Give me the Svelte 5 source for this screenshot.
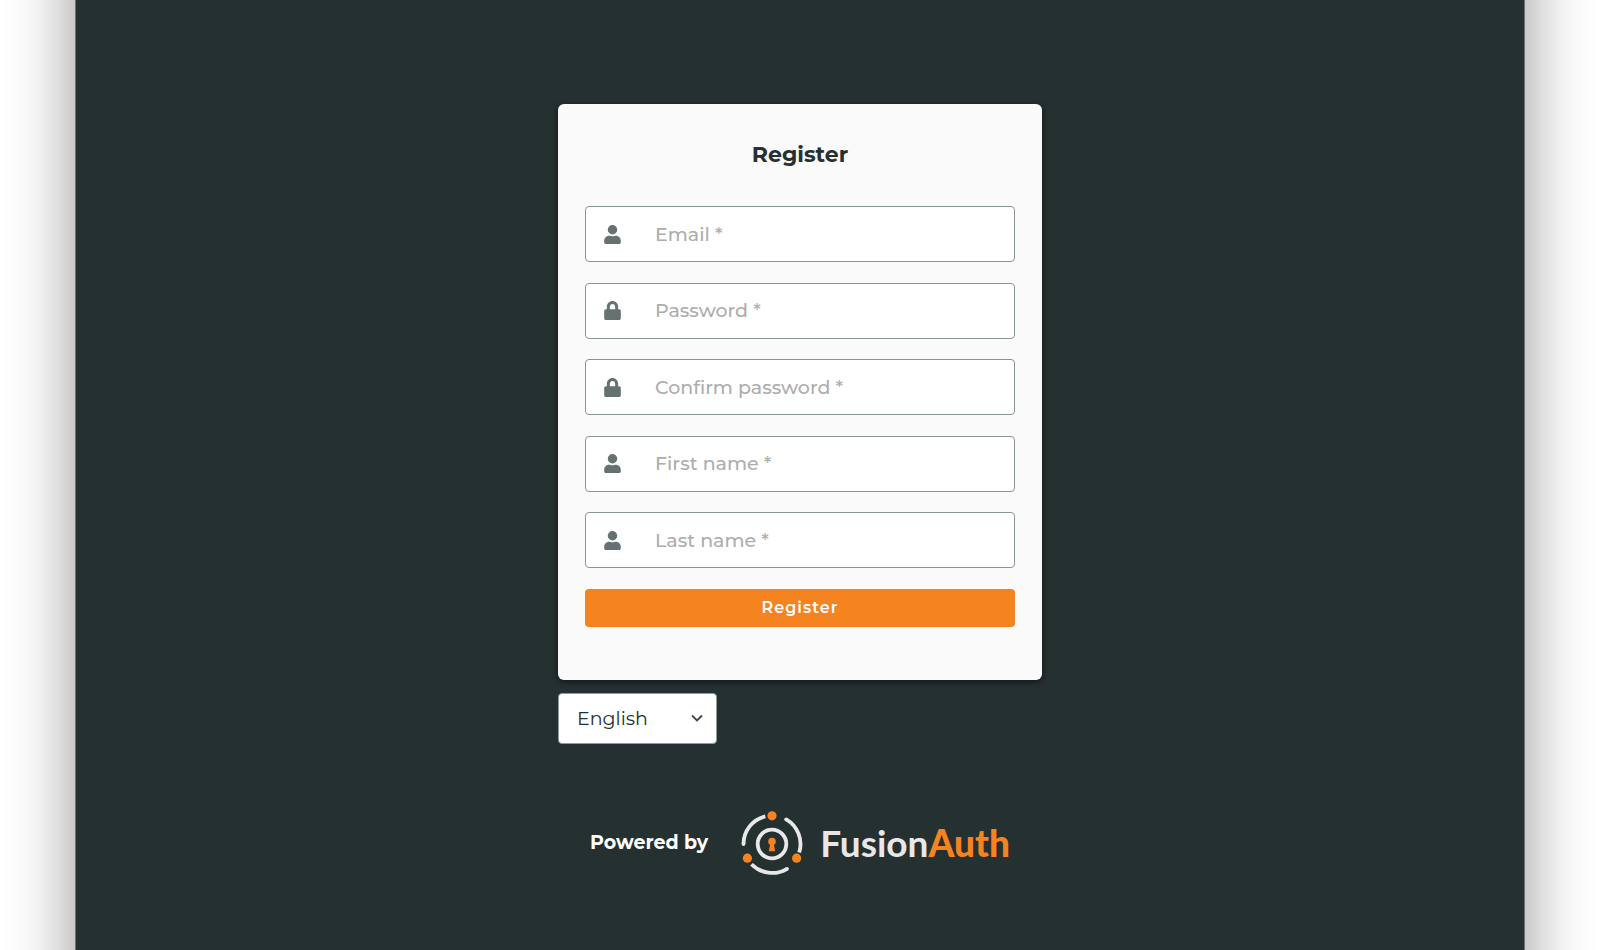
<script lang="ts">
  const fields = [
    { id: 'email', label: 'Email', type: 'email', icon: 'user' },
    { id: 'password', label: 'Password', type: 'password', icon: 'lock' },
    { id: 'confirm', label: 'Confirm password', type: 'password', icon: 'lock' },
    { id: 'first-name', label: 'First name', type: 'text', icon: 'user' },
    { id: 'last-name', label: 'Last name', type: 'text', icon: 'user' }
  ];
  const paths: Record<string, string> = {
    user: 'M224 256A128 128 0 1 0 224 0a128 128 0 1 0 0 256zm89.600 32h-16.700a174 174 0 0 1-145.800 0h-16.700C60.200 288 0 348.200 0 422.400V464c0 26.500 21.500 48 48 48h352c26.500 0 48-21.500 48-48v-41.600C448 348.200 387.800 288 313.600 288z',
    lock: 'M400 224h-24v-72C376 68.200 307.800 0 224 0S72 68.200 72 152v72H48c-26.500 0-48 21.500-48 48v192c0 26.500 21.500 48 48 48h352c26.500 0 48-21.500 48-48V272c0-26.500-21.500-48-48-48zm-104 0H152v-72c0-39.700 32.300-72 72-72s72 32.300 72 72v72z'
  };
</script>

<div class="backdrop">
  <main class="page">
    <div class="column">
      <section class="card">
        <h1>Register</h1>
        <form>
          {#each fields as field}
            <label class="field" for={field.id}>
              <svg viewBox="0 0 448 512" role="img" aria-label={field.label}>
                <path d={paths[field.icon]} />
              </svg>
              <input id={field.id} type={field.type} placeholder="{field.label} *" />
            </label>
          {/each}
          <button type="button">Register</button>
        </form>
      </section>

      <div class="language">
        <select aria-label="Language">
          <option>English</option>
        </select>
        <svg viewBox="0 0 12 8" aria-hidden="true"><path d="M1 1.500l5 5 5-5" /></svg>
      </div>

      <footer>
        <span class="powered">Powered by</span>
        <a class="brand" href="#fusionauth">
          <svg viewBox="-32 -33 64 66" aria-hidden="true">
            <g class="ring">
              <circle r="14.300" />
              <path d="M-28.500 0A28.500 28.500 0 0 1-6.700-27.700" />
              <path d="M14.200-24.700A28.500 28.500 0 0 1 27.200 8.500" />
              <path d="M15 24.800A28.800 28.800 0 0 1-20.500 20.200" />
            </g>
            <g class="caps">
              <circle cx="-28.500" cy="0" r="1.900" />
              <circle cx="14.200" cy="-24.700" r="1.900" />
              <circle cx="15" cy="24.800" r="1.900" />
            </g>
            <g class="accent">
              <circle cx="0" cy="-28.200" r="4.600" />
              <circle cx="-24.600" cy="14.200" r="4.600" />
              <circle cx="24.600" cy="14.200" r="4.600" />
              <circle cx="0" cy="-2.400" r="3.800" />
              <path d="M-1.800 0h3.600l1.400 7.300h-6.400z" />
            </g>
          </svg>
          <span class="wordmark">Fusion<b>Auth</b></span>
        </a>
      </footer>
    </div>
  </main>
</div>

<style>
  :global(body) {
    margin: 0;
    background: #fff;
  }
  /* The panel runs past both ends so its side shadow keeps an even strength. */
  .backdrop {
    overflow: hidden;
    min-height: 100vh;
    display: flex;
  }
  .page {
    box-sizing: border-box;
    flex: 1;
    min-width: 0;
    margin: -80px 75px;
    padding: 184px 20px 144px;
    background: #253031;
    border: 1px solid #6b7374;
    border-width: 0 1px;
    box-shadow: 0 0 64px rgba(0, 0, 0, 0.42);
    font-family: Montserrat, Inter, sans-serif;
    color: #253031;
  }
  .column {
    max-width: 484px;
    margin: 0 auto;
  }
  .card {
    padding: 36px 27px 53px;
    border-radius: 6px;
    background: #fafafa;
    box-shadow: 0 2px 6px rgba(0, 0, 0, 0.5);
  }
  h1 {
    margin: 0 0 36px;
    font-size: 22px;
    line-height: 30px;
    font-weight: 700;
    text-align: center;
  }
  form {
    display: flex;
    flex-direction: column;
    justify-content: space-between;
    min-height: 421px;
  }
  .field {
    box-sizing: border-box;
    display: flex;
    align-items: center;
    height: 56px;
    border: 1px solid #8a9495;
    border-radius: 4px;
    background: #fff;
  }
  .field svg {
    flex: none;
    width: 17px;
    height: 19px;
    margin: 0 18px;
    fill: #667172;
  }
  input {
    flex: 1;
    min-width: 0;
    height: 100%;
    box-sizing: border-box;
    padding: 0 16px;
    border: 0;
    border-radius: 4px;
    background: transparent;
    font: 500 19px Montserrat, Inter, sans-serif;
    color: #253031;
    outline: 0;
  }
  input::placeholder {
    color: #adadad;
    opacity: 1;
  }
  button {
    height: 38px;
    border: 0;
    border-radius: 4px;
    background: #f58320;
    color: #fff;
    font: 600 16px Montserrat, Inter, sans-serif;
    letter-spacing: 1px;
  }
  .language {
    position: relative;
    width: 159px;
    margin-top: 13px;
  }
  select {
    display: block;
    width: 100%;
    height: 51px;
    padding: 0 40px 0 18px;
    border: 1px solid #929b9c;
    border-radius: 4px;
    background: #fff;
    color: #253031;
    font: 400 19px Montserrat, Inter, sans-serif;
    appearance: none;
  }
  .language svg {
    position: absolute;
    top: 21px;
    right: 14px;
    width: 12px;
    height: 8px;
    fill: none;
    stroke: #3d4849;
    stroke-width: 1.800;
    pointer-events: none;
  }
  footer {
    display: flex;
    align-items: center;
    justify-content: center;
    gap: 32px;
    margin-top: 67px;
  }
  .powered {
    padding-bottom: 3px;
    color: #fff;
    font-size: 19px;
    font-weight: 700;
    white-space: nowrap;
  }
  .brand {
    display: flex;
    align-items: center;
    gap: 16px;
    color: #e8e8ea;
    text-decoration: none;
  }
  .brand svg {
    width: 64px;
    height: 66px;
  }
  .ring {
    fill: none;
    stroke: #e8e8ea;
    stroke-width: 3.800;
  }
  .caps {
    fill: #e8e8ea;
  }
  .accent {
    fill: #f58320;
  }
  .wordmark {
    padding-bottom: 2px;
    font: 700 37px/48px Lato, sans-serif;
  }
  .wordmark b {
    color: #f58320;
  }
</style>
